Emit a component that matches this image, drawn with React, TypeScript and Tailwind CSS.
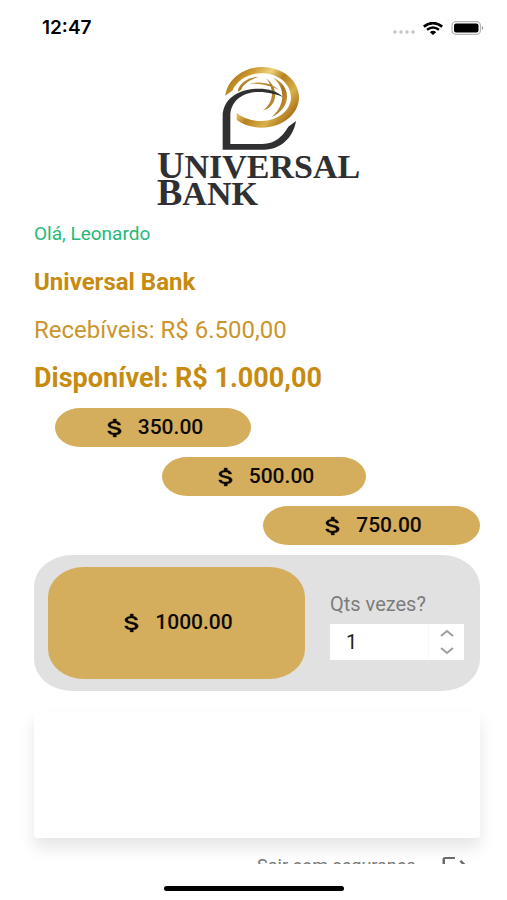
import { useState } from "react";

function DollarIcon() {
  return (
    <svg aria-hidden="true" viewBox="0 0 24 24" preserveAspectRatio="none" className="h-6 w-8 shrink-0">
      <path
        fill="#0d0a04"
        stroke="#0d0a04"
        strokeWidth="0.3"
        d="M11.8 10.9c-2.27-.59-3-1.2-3-2.15 0-1.09 1.01-1.85 2.7-1.85 1.78 0 2.44.85 2.5 2.1h2.21c-.07-1.72-1.12-3.3-3.21-3.81V3h-2.4v2.16c-1.94.42-3.9 1.68-3.9 3.61 0 2.31 1.91 3.46 4.7 4.13 2.5.6 3 1.48 3 2.41 0 .69-.49 1.79-2.7 1.79-2.06 0-2.87-.92-2.98-2.1h-2.2c.12 2.19 1.76 3.42 4.08 3.83V21h2.4v-2.15c1.95-.37 3.7-1.5 3.7-3.55 0-2.84-2.43-3.81-4.7-4.4z"
      />
    </svg>
  );
}

function AmountButton({ amount, className }: { amount: string; className: string }) {
  return (
    <button
      type="button"
      className={`flex items-center justify-center gap-[7px] bg-[#d4ae5c] pr-1 text-[21px] font-medium text-[#0d0a04] ${className}`}
    >
      <DollarIcon />
      <span>{amount}</span>
    </button>
  );
}

function StatusBar() {
  return (
    <header className="flex h-14 items-center justify-between pr-[22px] pl-[42px]">
      <span className="font-[Inter,sans-serif] text-[19px] font-semibold text-black">12:47</span>
      <div className="flex items-center gap-2">
        <svg aria-hidden="true" viewBox="0 0 22 4" className="mt-2 h-1 w-[22px]" fill="#c4c4c4">
          <circle cx="2" cy="2" r="1.7" />
          <circle cx="8" cy="2" r="1.7" />
          <circle cx="14" cy="2" r="1.7" />
          <circle cx="20" cy="2" r="1.7" />
        </svg>
        <svg aria-hidden="true" viewBox="0 0 20 13" className="h-[13px] w-5">
          <path d="M0.8 4.6Q10-2.4 19.2 4.6" fill="none" stroke="#000" strokeWidth="2.6" />
          <path d="M4 7.8Q10 3 16 7.8" fill="none" stroke="#000" strokeWidth="2.4" />
          <path d="M6.8 10.2Q10 7.4 13.2 10.2L10 13Z" fill="#000" />
        </svg>
        <svg aria-hidden="true" viewBox="0 0 34 14" className="h-[14px] w-[34px]">
          <rect x="1" y="0.7" width="28.5" height="12.6" rx="4" fill="none" stroke="#b5b5b5" strokeWidth="1.3" />
          <rect x="3" y="2.5" width="24.5" height="9" rx="2" fill="#000" />
          <path d="M31 5q2 2 0 4z" fill="#888" />
        </svg>
      </div>
    </header>
  );
}

function Logo() {
  return (
    <div className="ml-[123px] w-[210px]">
      <svg aria-hidden="true" viewBox="225 30 246 261" className="ml-[63px] h-[87px] w-[82px]">
        <defs>
          <linearGradient id="gold" x1="0" y1="0" x2="1" y2="0.7">
            <stop offset="0" stopColor="#9a5f12" />
            <stop offset="0.25" stopColor="#c8922b" />
            <stop offset="0.45" stopColor="#ecd27a" />
            <stop offset="0.6" stopColor="#b9801f" />
            <stop offset="0.8" stopColor="#d9b04a" />
            <stop offset="1" stopColor="#a56c14" />
          </linearGradient>
          <linearGradient id="globe" x1="0" y1="0" x2="1" y2="1">
            <stop offset="0" stopColor="#d9b256" />
            <stop offset="0.5" stopColor="#a87420" />
            <stop offset="1" stopColor="#cf9f3e" />
          </linearGradient>
        </defs>
        <path
          fill="url(#gold)"
          d="M241 122C246 76 292 36 350 36C412 36 462 76 462 127C462 178 412 218 350 218C320 218 293 209 275 195V173C293 189 320 198 350 198C399 198 438 166 438 127C438 86 399 55 350 55C307 55 276 77 262 107Z"
        />
        <path fill="url(#globe)" d="M384 68C440 90 442 158 380 186C420 152 424 100 384 68Z" />
        <path fill="url(#globe)" d="M278 110C282 84 308 67 342 65C312 74 294 88 288 105Z" />
        <path fill="url(#globe)" d="M364 70C404 102 398 154 354 167C386 142 390 106 364 70Z" />
        <path fill="url(#globe)" d="M312 86C340 78 376 82 404 106C374 90 346 86 312 86Z" />
        <path
          fill="#303033"
          d="M233 284V184C233 132 280 101 341 101C371 101 396 108 414 126C395 118 369 111 342 111C292 111 256 139 256 184V267H352C392 266 416 240 430 215L453 198C445 248 406 284 358 284Z"
        />
      </svg>
      <div className="font-['Liberation_Serif',serif] text-[34px]/[27px] font-bold text-[#303033]">
        <p className="h-[27px] first-letter:text-[38px]">UNIVERSAL</p>
        <p className="h-[27px] first-letter:text-[38px]">BANK</p>
      </div>
    </div>
  );
}

function Stepper() {
  const [count, setCount] = useState(1);
  return (
    <div className="flex w-[134px] flex-col gap-2 pt-[6px]">
      <label htmlFor="times" className="text-xl/6 text-[#7c7c7c]">
        Qts vezes?
      </label>
      <div className="flex h-9 bg-white">
        <input
          id="times"
          type="text"
          inputMode="numeric"
          value={count}
          onChange={(e) => setCount(Number(e.target.value) || 1)}
          className="w-0 flex-1 pl-4 text-xl text-[#222] outline-none"
        />
        <div className="flex w-9 flex-col border-l border-[#f8f8f8]">
          <button type="button" aria-label="Aumentar" onClick={() => setCount(count + 1)} className="grid flex-1 place-items-center">
            <svg viewBox="0 0 14 8" className="h-2 w-[14px]" fill="none" stroke="#9b9fa2" strokeWidth="2">
              <path d="M1 7l6-5 6 5" />
            </svg>
          </button>
          <button
            type="button"
            aria-label="Diminuir"
            onClick={() => setCount(Math.max(1, count - 1))}
            className="grid flex-1 place-items-center"
          >
            <svg viewBox="0 0 14 8" className="h-2 w-[14px]" fill="none" stroke="#9b9fa2" strokeWidth="2">
              <path d="M1 1l6 5 6-5" />
            </svg>
          </button>
        </div>
      </div>
    </div>
  );
}

export default function App() {
  return (
    <div className="flex h-screen flex-col bg-white font-[Roboto,sans-serif]">
      <StatusBar />
      <main className="flex min-h-0 flex-1 flex-col overflow-hidden pt-[9px] pr-[27px] pl-[34px]">
        <Logo />
        <p className="mt-4 text-[19px]/6 text-[#27b878]">Olá, Leonardo</p>
        <h1 className="mt-[22px] text-2xl/7 font-bold text-[#c78b10]">Universal Bank</h1>
        <p className="mt-5 text-2xl/7 text-[#cb952c]">Recebíveis: R$ 6.500,00</p>
        <p className="mt-5 text-[27px]/7 font-bold text-[#c78b10]">Disponível: R$ 1.000,00</p>
        <div className="mt-4 flex flex-col gap-[10px]">
          <AmountButton amount="350.00" className="ml-[21px] h-[39px] w-[196px] rounded-[26px/20px]" />
          <AmountButton amount="500.00" className="ml-32 h-[39px] w-[204px] rounded-[26px/20px]" />
          <AmountButton amount="750.00" className="ml-auto h-[39px] w-[217px] rounded-[26px/20px]" />
        </div>
        <section className="mt-[10px] flex shrink-0 items-center justify-between rounded-[38px/32px] bg-[#e1e1e1] py-3 pr-4 pl-[14px]">
          <AmountButton amount="1000.00" className="h-28 w-[257px] rounded-[36px/30px]" />
          <Stepper />
        </section>
        <section className="mt-5 h-[127px] shrink-0 rounded-[3px] bg-white shadow-[0_10px_16px_rgba(0,0,0,0.1)]" />
        <a href="#sair" className="mt-4 mr-[10px] flex shrink-0 items-start justify-end gap-6 text-lg/6 text-[#777]">
          <span>Sair com segurança</span>
          <svg aria-hidden="true" viewBox="0 0 24 24" preserveAspectRatio="none" className="h-6 w-[30px]" fill="#6b6b6b">
            <path d="M17 6l-1.41 1.41L18.17 11H8v2h10.17l-2.58 2.58L17 17l5-5zM4 5h8V3H4c-1.1 0-2 .9-2 2v14c0 1.1.9 2 2 2h8v-2H4V5z" />
          </svg>
        </a>
      </main>
      <footer className="flex h-9 shrink-0 items-end justify-center pb-[9px]">
        <div className="h-[5px] w-[180px] rounded-full bg-black" />
      </footer>
    </div>
  );
}
